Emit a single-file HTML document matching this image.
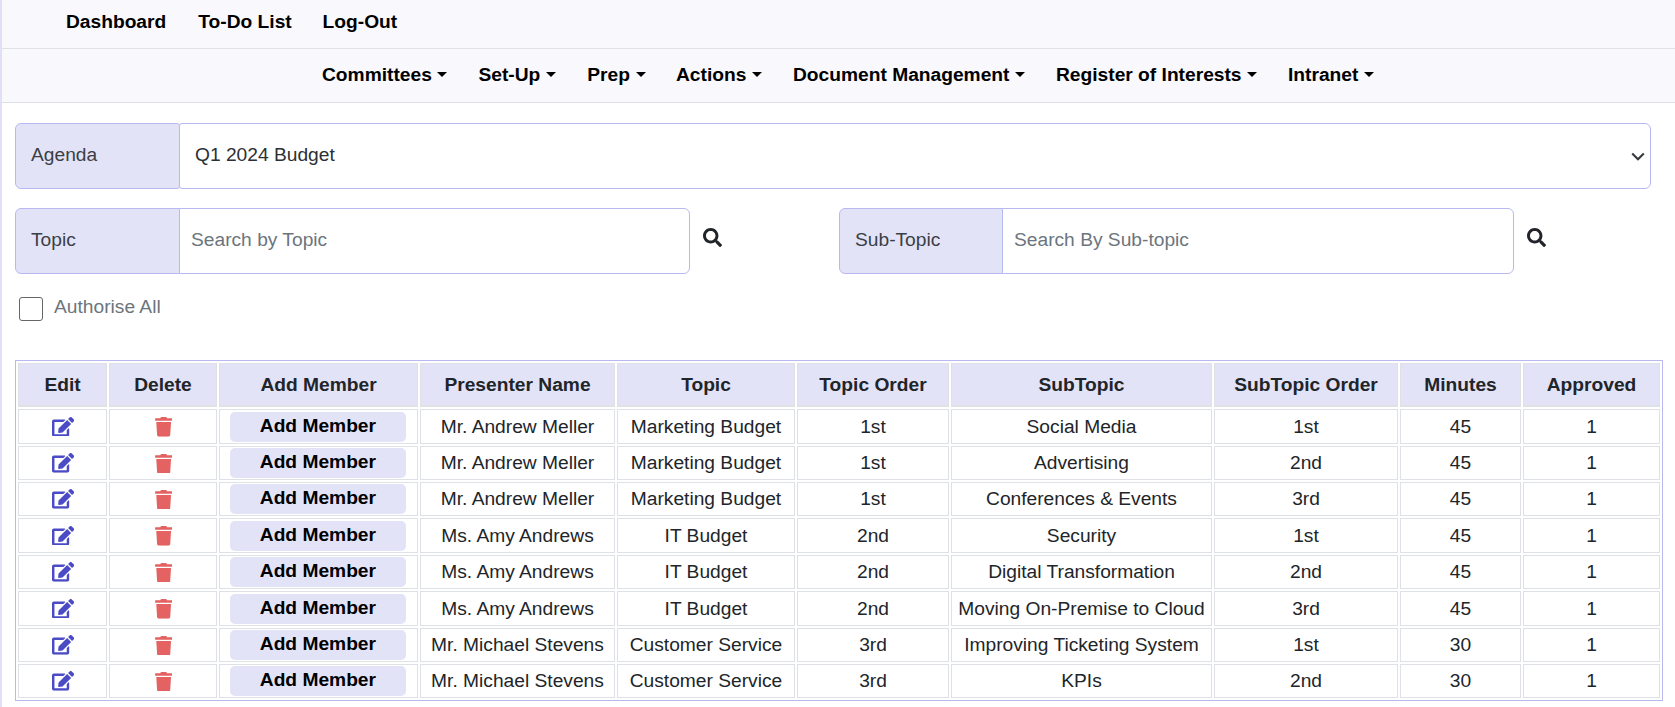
<!DOCTYPE html>
<html><head><meta charset="utf-8">
<style>
*{box-sizing:border-box;margin:0;padding:0}
html,body{width:1675px;height:707px;overflow:hidden;background:#fff;font-family:"Liberation Sans",sans-serif;color:#212529}
#lb{position:absolute;left:0;top:0;width:1px;height:707px;background:#e0e0f8}
#lb2{position:absolute;left:1px;top:0;width:1px;height:707px;background:#dee2e6}
#nav1{position:absolute;left:2px;top:0;width:1673px;height:49px;background:#f8f8fd;border-bottom:1px solid #dee2e6}
#nav2{position:absolute;left:2px;top:49px;width:1673px;height:54px;background:#f8f8fd;border-bottom:1px solid #dee2e6}
.ni{position:absolute;font-weight:bold;font-size:19.2px;color:#000;white-space:nowrap;line-height:1}
.car{display:inline-block;width:0;height:0;border-left:5px solid transparent;border-right:5px solid transparent;border-top:5px solid #000;vertical-align:middle;margin-left:5.6px;position:relative;top:-1.4px}
.ig{position:absolute;height:66px}
.ig .lab{position:absolute;left:0;top:0;height:66px;width:165px;background:#e3e3f8;border:1px solid #b9b9f2;border-radius:6px 3px 3px 6px;font-size:19.2px;color:#3a3f44;line-height:61px;padding-left:15px}
.ig .val{position:absolute;left:164px;top:0;height:66px;right:0;background:#fff;border:1px solid #b9b9f2;border-radius:3px 6px 6px 3px;font-size:19.2px;line-height:61px;padding-left:15px;color:#2b3035}
.ig .val.ph{padding-left:11px;color:#6c757d}
.ig.sq .lab{border-radius:6px 0 0 6px}
.ig.sq .val{border-radius:0 6px 6px 0}
.chev{position:absolute;right:5px;top:28px;width:14px;height:9px}
.srch{position:absolute;width:19px;height:19px}
table{table-layout:fixed;position:absolute;left:15px;top:360px;width:1648px;border:1px solid #b9b9f2;border-spacing:2px;border-collapse:separate}
th,td{border:1px solid #dee2e6;text-align:center;font-size:19.2px;white-space:nowrap;padding:0}
th{background:#e3e3f8;font-weight:bold;height:44px;border-bottom-width:2px}
td{height:auto}
.ed{width:22.1px;height:19.7px;fill:#4b4bc6;vertical-align:middle;position:relative;top:-0.8px;left:0.3px}
.tr{width:17.3px;height:19.7px;fill:#e46262;vertical-align:middle;position:relative;top:-0.5px;left:0.7px}
.btn{display:inline-block;background:#e3e3f8;border-radius:6px;font-weight:bold;color:#000;width:176px;height:30px;line-height:27.6px;border-radius:5px;vertical-align:middle;position:relative;left:-0.6px}
</style></head><body>
<svg width="0" height="0" style="position:absolute">
<defs>
<symbol id="edi" viewBox="0 0 576 512"><path d="M402.6 83.2l90.2 90.2c3.8 3.8 3.8 10 0 13.8L274.4 405.6l-92.8 10.3c-12.4 1.4-22.9-9.1-21.5-21.5l10.3-92.8L388.8 83.2c3.8-3.8 10-3.8 13.8 0zm162-22.9l-48.8-48.8c-15.2-15.2-39.9-15.2-55.2 0l-35.4 35.4c-3.8 3.8-3.8 10 0 13.8l90.2 90.2c3.8 3.8 10 3.8 13.8 0l35.4-35.4c15.2-15.3 15.2-40 0-55.2zM384 346.2V448H64V128h229.8c3.2 0 6.2-1.3 8.5-3.5l40-40c7.6-7.6 2.2-20.5-8.5-20.5H48C21.5 64 0 85.5 0 112v352c0 26.5 21.5 48 48 48h352c26.5 0 48-21.5 48-48V306.2c0-10.7-12.9-16-20.5-8.5l-40 40c-2.2 2.3-3.5 5.3-3.5 8.5z"/></symbol>
<symbol id="tri" viewBox="0 0 448 512"><path d="M432 32H312l-9.4-18.7A24 24 0 0 0 281.1 0H166.8a23.72 23.72 0 0 0-21.4 13.3L136 32H16A16 16 0 0 0 0 48v32a16 16 0 0 0 16 16h416a16 16 0 0 0 16-16V48a16 16 0 0 0-16-16zM53.2 467a48 48 0 0 0 47.9 45h245.8a48 48 0 0 0 47.9-45L416 128H32z"/></symbol>
<symbol id="sri" viewBox="0 0 512 512"><path d="M505 442.7L405.3 343c-4.5-4.5-10.6-7-17-7H372c27.6-35.3 44-79.7 44-128C416 93.1 322.9 0 208 0S0 93.1 0 208s93.1 208 208 208c48.3 0 92.7-16.4 128-44v16.3c0 6.4 2.5 12.5 7 17l99.7 99.7c9.4 9.4 24.6 9.4 33.9 0l28.3-28.3c9.4-9.4 9.4-24.6.1-34zM208 336c-70.7 0-128-57.2-128-128 0-70.7 57.2-128 128-128 70.7 0 128 57.2 128 128 0 70.7-57.2 128-128 128z"/></symbol>
</defs></svg>
<div id="lb"></div><div id="lb2"></div>
<div id="nav1">
  <span class="ni" style="left:64px;top:11.8px">Dashboard</span>
  <span class="ni" style="left:196.3px;top:11.8px">To-Do List</span>
  <span class="ni" style="left:320.6px;top:11.8px">Log-Out</span>
</div>
<div id="nav2">
  <span class="ni" style="left:320px;top:16.4px">Committees<i class="car"></i></span>
  <span class="ni" style="left:476.5px;top:16.4px">Set-Up<i class="car"></i></span>
  <span class="ni" style="left:585.3px;top:16.4px">Prep<i class="car"></i></span>
  <span class="ni" style="left:674px;top:16.4px">Actions<i class="car"></i></span>
  <span class="ni" style="left:791px;top:16.4px">Document Management<i class="car"></i></span>
  <span class="ni" style="left:1054px;top:16.4px">Register of Interests<i class="car"></i></span>
  <span class="ni" style="left:1286px;top:16.4px">Intranet<i class="car"></i></span>
</div>

<div class="ig" style="left:15px;top:123px;width:1636px">
  <div class="lab">Agenda</div>
  <div class="val">Q1 2024 Budget<svg class="chev" viewBox="0 0 14 9"><path d="M1.2 1.5l5.8 5.8 5.8-5.8" fill="none" stroke="#343a40" stroke-width="2.1"/></svg></div>
</div>

<div class="ig sq" style="left:15px;top:208px;width:675px">
  <div class="lab">Topic</div>
  <div class="val ph">Search by Topic</div>
</div>
<div class="ig sq" style="left:839px;top:208px;width:675px">
  <div class="lab" style="width:164px">Sub-Topic</div>
  <div class="val ph" style="left:163px">Search By Sub-topic</div>
</div>

<svg class="srch" style="left:703px;top:228px;fill:#212529" viewBox="0 0 512 512"><use href="#sri"/></svg>
<svg class="srch" style="left:1527px;top:228px;fill:#212529" viewBox="0 0 512 512"><use href="#sri"/></svg>
<div style="position:absolute;left:19px;top:297px;width:24px;height:24px;border:1px solid #666;border-radius:3px"></div>
<div style="position:absolute;left:54px;top:295.5px;font-size:19.2px;color:#6c757d">Authorise All</div>

<table>
<tr><th style="width:89px">Edit</th><th style="width:108px">Delete</th><th style="width:199px">Add Member</th><th style="width:195px">Presenter Name</th><th style="width:178px">Topic</th><th style="width:152px">Topic Order</th><th style="width:261px">SubTopic</th><th style="width:184px">SubTopic Order</th><th style="width:121px">Minutes</th><th style="width:137px">Approved</th></tr>
<tr style="height:35px"><td><svg class="ed" viewBox="0 0 576 512"><use href="#edi"/></svg></td><td><svg class="tr" viewBox="0 0 448 512"><use href="#tri"/></svg></td><td><span class="btn">Add Member</span></td><td>Mr. Andrew Meller</td><td>Marketing Budget</td><td>1st</td><td>Social Media</td><td>1st</td><td>45</td><td>1</td></tr>
<tr style="height:34px"><td><svg class="ed" viewBox="0 0 576 512"><use href="#edi"/></svg></td><td><svg class="tr" viewBox="0 0 448 512"><use href="#tri"/></svg></td><td><span class="btn">Add Member</span></td><td>Mr. Andrew Meller</td><td>Marketing Budget</td><td>1st</td><td>Advertising</td><td>2nd</td><td>45</td><td>1</td></tr>
<tr style="height:34px"><td><svg class="ed" viewBox="0 0 576 512"><use href="#edi"/></svg></td><td><svg class="tr" viewBox="0 0 448 512"><use href="#tri"/></svg></td><td><span class="btn">Add Member</span></td><td>Mr. Andrew Meller</td><td>Marketing Budget</td><td>1st</td><td>Conferences &amp; Events</td><td>3rd</td><td>45</td><td>1</td></tr>
<tr style="height:35px"><td><svg class="ed" viewBox="0 0 576 512"><use href="#edi"/></svg></td><td><svg class="tr" viewBox="0 0 448 512"><use href="#tri"/></svg></td><td><span class="btn">Add Member</span></td><td>Ms. Amy Andrews</td><td>IT Budget</td><td>2nd</td><td>Security</td><td>1st</td><td>45</td><td>1</td></tr>
<tr style="height:34px"><td><svg class="ed" viewBox="0 0 576 512"><use href="#edi"/></svg></td><td><svg class="tr" viewBox="0 0 448 512"><use href="#tri"/></svg></td><td><span class="btn">Add Member</span></td><td>Ms. Amy Andrews</td><td>IT Budget</td><td>2nd</td><td>Digital Transformation</td><td>2nd</td><td>45</td><td>1</td></tr>
<tr style="height:35px"><td><svg class="ed" viewBox="0 0 576 512"><use href="#edi"/></svg></td><td><svg class="tr" viewBox="0 0 448 512"><use href="#tri"/></svg></td><td><span class="btn">Add Member</span></td><td>Ms. Amy Andrews</td><td>IT Budget</td><td>2nd</td><td>Moving On-Premise to Cloud</td><td>3rd</td><td>45</td><td>1</td></tr>
<tr style="height:34px"><td><svg class="ed" viewBox="0 0 576 512"><use href="#edi"/></svg></td><td><svg class="tr" viewBox="0 0 448 512"><use href="#tri"/></svg></td><td><span class="btn">Add Member</span></td><td>Mr. Michael Stevens</td><td>Customer Service</td><td>3rd</td><td>Improving Ticketing System</td><td>1st</td><td>30</td><td>1</td></tr>
<tr style="height:34px"><td><svg class="ed" viewBox="0 0 576 512"><use href="#edi"/></svg></td><td><svg class="tr" viewBox="0 0 448 512"><use href="#tri"/></svg></td><td><span class="btn">Add Member</span></td><td>Mr. Michael Stevens</td><td>Customer Service</td><td>3rd</td><td>KPIs</td><td>2nd</td><td>30</td><td>1</td></tr>
</table>
</body></html>
